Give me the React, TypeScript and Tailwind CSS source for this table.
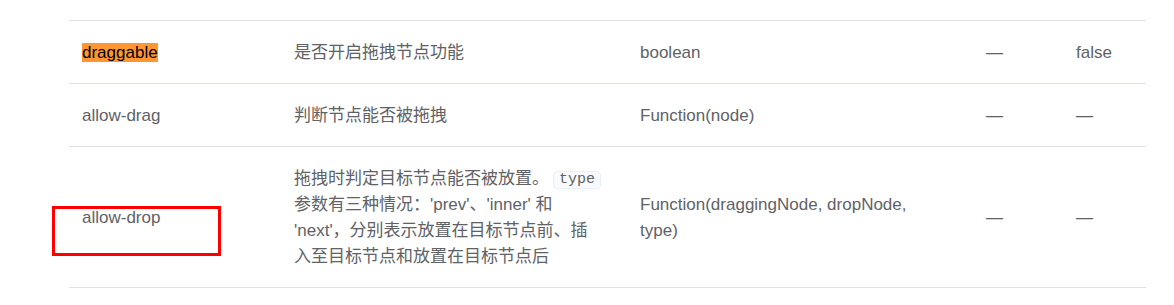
const rows = [
  {
    name: 'draggable',
    desc: [['是否开启拖拽节点功能']],
    type: ['boolean'],
    options: '—',
    def: 'false',
    highlight: true,
  },
  {
    name: 'allow-drag',
    desc: [['判断节点能否被拖拽']],
    type: ['Function(node)'],
    options: '—',
    def: '—',
  },
  {
    name: 'allow-drop',
    desc: [
      ['拖拽时判定目标节点能否被放置。', 'type'],
      ["参数有三种情况：'prev'、'inner' 和"],
      ["'next'，分别表示放置在目标节点前、插"],
      ['入至目标节点和放置在目标节点后'],
    ],
    type: ['Function(draggingNode, dropNode,', 'type)'],
    options: '—',
    def: '—',
    marked: true,
  },
];

const cell = 'px-[13px] pt-[19px] pb-[17px]';

export default function App() {
  return (
    <div
      className="relative h-[305px] w-full bg-white pt-[20px] text-[17px] leading-[26px] text-[#606266]"
      style={{ fontFamily: '"Liberation Sans", "Noto Sans CJK SC", sans-serif' }}
    >
      <div className="ml-[69px] w-[1077px] border-t border-[#dfe2e8]">
        {rows.map((r) => (
          <div
            key={r.name}
            className="grid grid-cols-[212px_346px_346px_90px_83px] items-center border-b border-[#dfe2e8]"
          >
            <div className={cell}>
              <div className="relative h-[26px]">
                {r.highlight ? (
                  <span className="bg-[#ff9632] text-black">{r.name}</span>
                ) : (
                  r.name
                )}
                {r.marked && (
                  <div className="pointer-events-none absolute left-[-30px] top-[1px] h-[50px] w-[169px] border-[3px] border-[#ff0000]" />
                )}
              </div>
            </div>
            <div className={cell}>
              {r.desc.map((line, i) => (
                <div key={i} className="h-[26px] whitespace-nowrap">
                  {line[0]}
                  {line[1] && (
                    <code
                      className="ml-[4px] inline-block h-[18px] rounded-[4px] border border-[#eaeefb] bg-[#f9fafc] px-[5px] align-[1px] text-[15px] leading-[16px]"
                      style={{ fontFamily: '"Liberation Mono", monospace' }}
                    >
                      {line[1]}
                    </code>
                  )}
                </div>
              ))}
            </div>
            <div className={cell}>
              {r.type.map((t) => (
                <div key={t} className="whitespace-nowrap">
                  {t}
                </div>
              ))}
            </div>
            <div className={cell}>{r.options}</div>
            <div className={cell}>{r.def}</div>
          </div>
        ))}
      </div>
    </div>
  );
}
